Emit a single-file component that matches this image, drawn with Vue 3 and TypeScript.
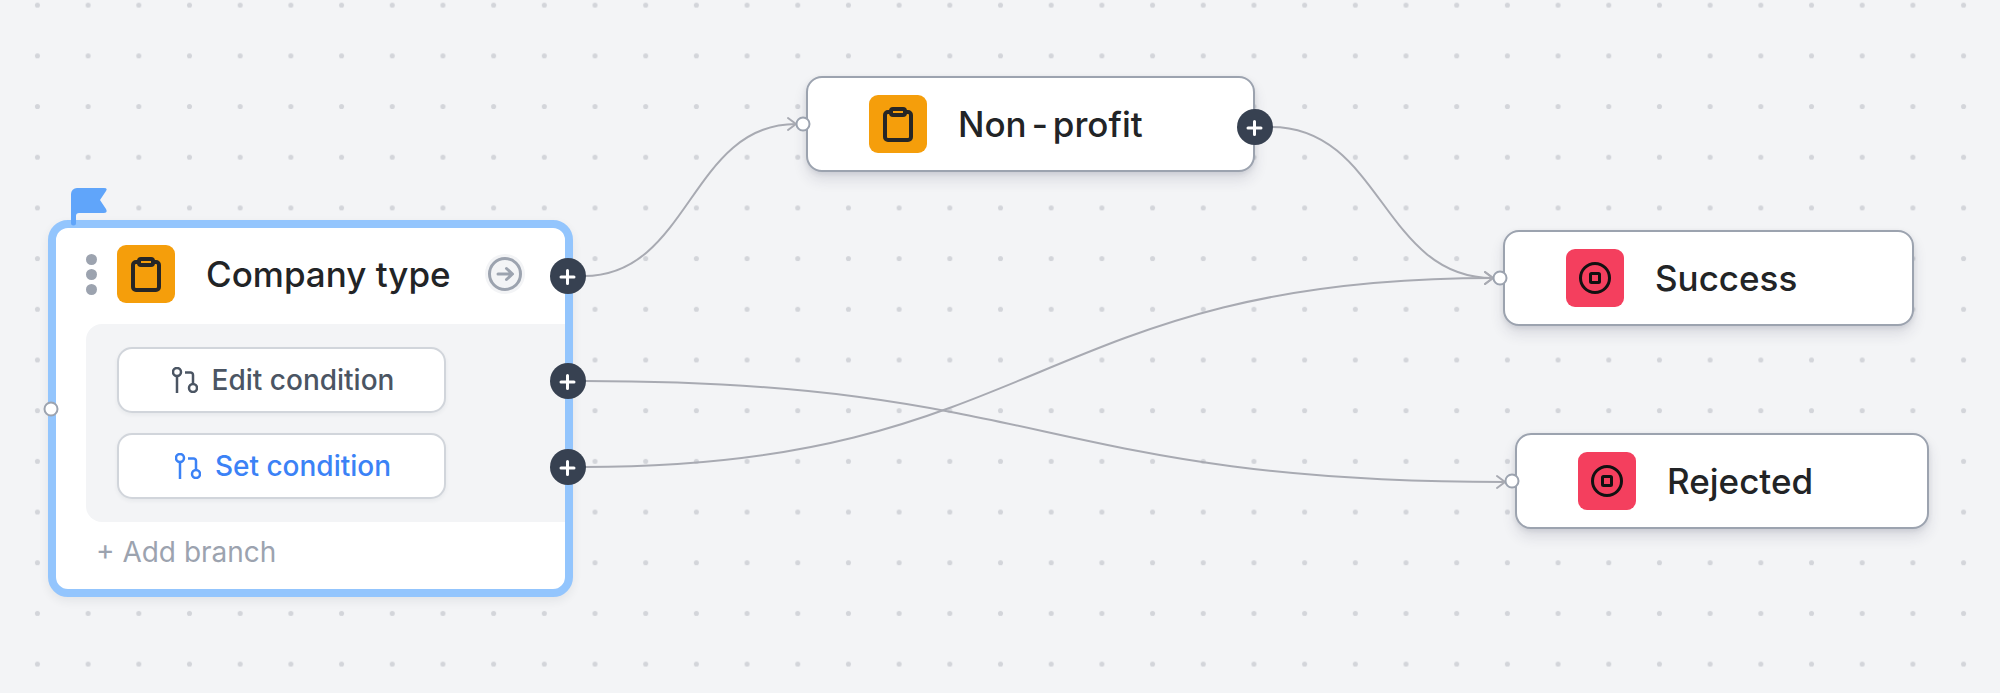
<script setup lang="ts">
interface Point {
  x: number
  y: number
}

interface StepNode {
  id: string
  title: string
  kind: 'form' | 'end'
  x: number
  y: number
  width: number
}

interface Wire {
  from: Point
  to: Point
}

const steps: StepNode[] = [
  { id: 'non-profit', title: 'Non-profit', kind: 'form', x: 806, y: 76, width: 449 },
  { id: 'success', title: 'Success', kind: 'end', x: 1503, y: 230, width: 411 },
  { id: 'rejected', title: 'Rejected', kind: 'end', x: 1515, y: 433, width: 414 },
]

const branches = [
  { id: 'edit', label: 'Edit condition' },
  { id: 'set', label: 'Set condition' },
]

const wires: Wire[] = [
  { from: { x: 584, y: 276 }, to: { x: 796, y: 124 } },
  { from: { x: 1271, y: 127 }, to: { x: 1493, y: 278 } },
  { from: { x: 584, y: 381 }, to: { x: 1505, y: 482 } },
  { from: { x: 584, y: 467 }, to: { x: 1493, y: 278 } },
]

const outlets = [wires[0], wires[2], wires[3], wires[1]]

function titleParts(title: string): string[] {
  return title.split(/(-)/)
}

function curve({ from, to }: Wire): string {
  const mid = (from.x + to.x) / 2
  return `M${from.x} ${from.y}C${mid} ${from.y} ${mid} ${to.y} ${to.x} ${to.y}`
}

function arrow({ to }: Wire): string {
  return `M${to.x - 8} ${to.y - 6}L${to.x} ${to.y}L${to.x - 8} ${to.y + 6}`
}
</script>

<template>
  <main class="canvas">
    <svg class="layer" aria-hidden="true">
      <defs>
        <pattern
          id="grid"
          width="24"
          height="24"
          patternUnits="userSpaceOnUse"
          patternTransform="translate(12.1 -20.2) scale(2.112)"
        >
          <circle class="grid-dot" cx="12" cy="12" r="1.2" />
        </pattern>
      </defs>
      <rect width="100%" height="100%" fill="url(#grid)" />
    </svg>

    <section class="node selected">
      <svg class="flag" viewBox="0 0 36 40" aria-hidden="true">
        <path d="M0 8a6 6 0 0 1 6-6H33q4 0 2 3L29 14l6 9q2 4-2 4H8q-3 0-3 3V37a2 2 0 0 1-5 0z" />
      </svg>

      <header class="selected-head">
        <button class="grip" type="button" aria-label="Move step"><i></i><i></i><i></i></button>
        <span class="tile form">
          <svg viewBox="0 0 58 58" aria-hidden="true">
            <path d="M22 17h-3a3 3 0 0 0-3 3v22a3 3 0 0 0 3 3h20a3 3 0 0 0 3-3V20a3 3 0 0 0-3-3h-3" />
            <rect x="22" y="14" width="14" height="6" rx="2" />
          </svg>
        </span>
        <h2 class="title">Company type</h2>
        <button class="jump" type="button" aria-label="Open step">
          <svg viewBox="0 0 40 40" aria-hidden="true">
            <circle cx="20" cy="20" r="15.5" />
            <path d="M13 20h14M21.5 14.5L27.5 20L21.5 25.5" />
          </svg>
        </button>
      </header>

      <div class="branches">
        <button v-for="b in branches" :key="b.id" class="condition" :class="b.id" type="button">
          <svg viewBox="0 0 26 26" aria-hidden="true">
            <circle cx="5" cy="5" r="4" />
            <path d="M5 9v17M13 5.5h5.5a2.5 2.5 0 0 1 2.5 2.5v9" />
            <circle cx="21" cy="21" r="4" />
          </svg>
          {{ b.label }}
        </button>
      </div>

      <button class="add-branch" type="button">+ Add branch</button>
    </section>

    <section
      v-for="s in steps"
      :key="s.id"
      class="node step"
      :style="{ left: s.x + 'px', top: s.y + 'px', width: s.width + 'px' }"
    >
      <span class="tile" :class="s.kind">
        <svg v-if="s.kind === 'form'" viewBox="0 0 58 58" aria-hidden="true">
          <path d="M22 17h-3a3 3 0 0 0-3 3v22a3 3 0 0 0 3 3h20a3 3 0 0 0 3-3V20a3 3 0 0 0-3-3h-3" />
          <rect x="22" y="14" width="14" height="6" rx="2" />
        </svg>
        <svg v-else viewBox="0 0 58 58" aria-hidden="true">
          <circle cx="29" cy="29" r="14.5" />
          <rect x="24.5" y="24.5" width="9" height="9" rx="1" />
        </svg>
      </span>
      <h2 class="title"><span v-for="(part, i) in titleParts(s.title)" :key="i" :class="{ dash: part === '-' }">{{ part }}</span></h2>
    </section>

    <svg class="layer wires" aria-hidden="true">
      <template v-for="(w, i) in wires" :key="i">
        <path :d="curve(w)" />
        <path class="head" :d="arrow(w)" />
      </template>
    </svg>

    <i class="inlet company-in"></i>
    <i
      v-for="s in steps"
      :key="s.id"
      class="inlet"
      :style="{ left: s.x - 3 + 'px', top: s.y + 48 + 'px' }"
    ></i>

    <button
      v-for="p in outlets"
      :key="p.from.y"
      class="outlet"
      type="button"
      aria-label="Add step"
      :style="{ left: p.from.x - 16 + 'px', top: p.from.y + 'px' }"
    >
      <svg viewBox="0 0 36 36" aria-hidden="true"><path d="M11 19h13M17.5 12.5v13" /></svg>
    </button>
  </main>
</template>

<style>
body {
  margin: 0;
  background: #f3f4f6;
}
</style>

<style scoped>
.canvas {
  position: relative;
  min-height: 100vh;
  overflow: hidden;
  background: #f3f4f6;
  font-family: Inter, "Liberation Sans", sans-serif;
  color: #222426;
}

.layer {
  position: absolute;
  inset: 0;
  width: 100%;
  height: 100%;
  pointer-events: none;
}

.grid-dot {
  fill: #d3d5da;
}

.wires {
  fill: none;
  stroke: #a8aab2;
  stroke-width: 2;
}

.head {
  stroke-linecap: round;
}

button {
  font: inherit;
  margin: 0;
  padding: 0;
  border: 0;
  background: none;
  color: inherit;
  cursor: pointer;
}

svg {
  display: block;
}

.node {
  position: absolute;
  box-sizing: border-box;
  background: #fff;
}

.step {
  display: flex;
  align-items: center;
  gap: 31px;
  padding: 17px 0 17px 61px;
  border: 2px solid #9ca3af;
  border-radius: 16px;
  box-shadow: 0 8px 14px rgba(40, 45, 70, 0.12), 0 2px 5px rgba(40, 45, 70, 0.1);
}

.selected {
  left: 48px;
  top: 220px;
  width: 525px;
  border: 8px solid #93c5fd;
  border-radius: 20px;
  box-shadow: 0 4px 10px rgba(40, 45, 70, 0.08);
}

.flag {
  position: absolute;
  left: 15px;
  top: -42px;
  width: 36px;
  height: 40px;
  fill: #60a5fa;
}

.selected-head {
  display: flex;
  align-items: center;
  padding: 17px 40px 21px 30px;
}

.grip {
  display: grid;
  gap: 4px;
  margin-right: 20px;
}

.grip i {
  width: 11px;
  height: 11px;
  border-radius: 50%;
  background: #9ca3af;
}

.tile {
  width: 58px;
  height: 58px;
  flex: none;
  border-radius: 9px;
}

.tile svg {
  fill: none;
  stroke: #262626;
  stroke-width: 4;
  stroke-linejoin: round;
}

.tile.form {
  background: #f59e0b;
}

.tile.end {
  background: #f43f5e;
}

.tile.end svg {
  stroke: #111;
  stroke-width: 3;
}

.title {
  margin: 0;
  font-size: 35px;
  line-height: 44px;
  font-weight: 500;
  white-space: nowrap;
}

.dash {
  margin: 0 5px;
}

.selected-head .title {
  flex: 1;
  margin-left: 31px;
}

.jump {
  width: 40px;
  height: 40px;
  border-radius: 50%;
  background: #f3f4f6;
}

.jump svg {
  fill: none;
  stroke: #9ca3af;
  stroke-width: 3;
  stroke-linecap: round;
  stroke-linejoin: round;
}

.branches {
  display: flex;
  flex-direction: column;
  gap: 20px;
  margin-left: 30px;
  padding: 23px 119px 23px 31px;
  border-radius: 16px 0 0 16px;
  background: #f3f4f6;
}

.condition {
  display: flex;
  align-items: center;
  justify-content: center;
  gap: 14px;
  height: 66px;
  padding-left: 3px;
  border: 2px solid #d1d5db;
  border-radius: 15px;
  background: #fff;
  box-shadow: 0 2px 4px rgba(40, 45, 70, 0.06);
  font-size: 28px;
  line-height: 34px;
  font-weight: 500;
  color: #4b5563;
}

.condition svg {
  width: 26px;
  height: 26px;
  fill: none;
  stroke: currentColor;
  stroke-width: 2.5;
}

.condition.set {
  color: #3b82f6;
}

.add-branch {
  display: block;
  margin: 13px 0 20px 40px;
  font-size: 28px;
  line-height: 34px;
  color: #9ca3af;
}

.inlet {
  position: absolute;
  box-sizing: border-box;
  width: 15px;
  height: 15px;
  border: 2px solid #9ca3af;
  border-radius: 50%;
  background: #fff;
  transform: translate(-50%, -50%);
}

.company-in {
  left: 51px;
  top: 409px;
}

.outlet {
  position: absolute;
  width: 36px;
  height: 36px;
  border-radius: 50%;
  background: #374151;
  transform: translate(-50%, -50%);
}

.outlet svg {
  fill: none;
  stroke: #fff;
  stroke-width: 3;
  stroke-linecap: round;
}
</style>
